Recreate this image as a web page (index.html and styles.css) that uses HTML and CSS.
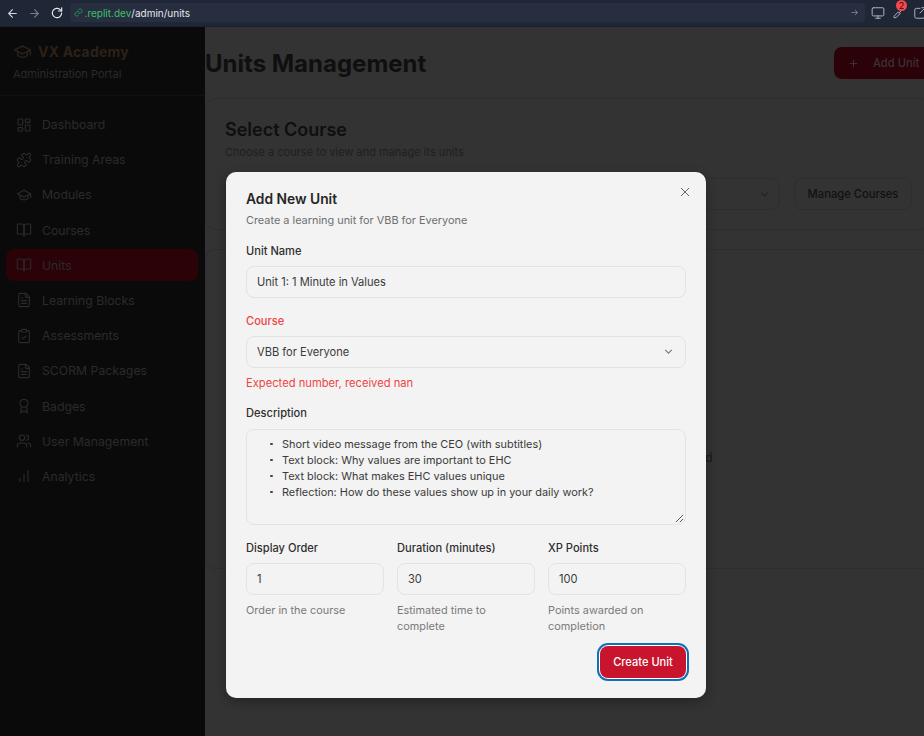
FILE: index.html
```html
<!DOCTYPE html>
<html lang="en">
<head>
<meta charset="utf-8">
<title>Units Management</title>
<link rel="stylesheet" href="styles.css">
</head>
<body>
<header class="browser">
  <svg class="b-icon back" viewBox="0 0 24 24"><path d="M19 12H5M12 5l-7 7 7 7"/></svg>
  <svg class="b-icon fwd" viewBox="0 0 24 24"><path d="M5 12h14M12 5l7 7-7 7"/></svg>
  <svg class="b-icon reload" viewBox="0 0 24 24"><path d="M20 12a8 8 0 1 1-2.600-5.900L20 8.500"/><path d="M20 3v5.500h-5.500"/></svg>
  <div class="url">
    <svg class="link" viewBox="0 0 24 24"><path d="M10 13a5 5 0 0 0 7.500.5l3-3a5 5 0 0 0-7-7l-1.700 1.700"/><path d="M14 11a5 5 0 0 0-7.500-.5l-3 3a5 5 0 0 0 7 7l1.700-1.700"/></svg>
    <span class="host">.replit.dev</span><span class="path">/admin/units</span>
    <svg class="go" viewBox="0 0 24 24"><path d="M4 12h16M13 5l7 7-7 7"/></svg>
  </div>
  <svg class="t-icon" viewBox="0 0 24 24"><rect x="2" y="3" width="20" height="14" rx="2"/><path d="M8 21h8M12 17v4"/></svg>
  <div class="ext">
    <svg class="t-icon" viewBox="0 0 24 24"><path d="M21 3l-9 9M4 17l7-7 3 3-7 7H4z"/></svg>
    <span class="badge">2</span>
  </div>
  <svg class="t-icon" viewBox="0 0 24 24"><path d="M12 4H6a3 3 0 0 0-3 3v11a3 3 0 0 0 3 3h11a3 3 0 0 0 3-3v-6M21 3l-9 9M15 3h6v6"/></svg>
</header>

<div class="app">
  <aside class="sidebar">
    <div class="brand">
      <div class="brand-row">
        <svg class="cap" viewBox="0 0 24 24"><path d="M22 10v6M2 10l10-5 10 5-10 5z"/><path d="M6 12v5c3 3 9 3 12 0v-5"/></svg>
        <span class="brand-name">VX Academy</span>
      </div>
      <div class="brand-sub">Administration Portal</div>
    </div>
    <nav class="nav">
      <a class="nav-item"><svg class="ico" viewBox="0 0 24 24"><rect x="3" y="3" width="7" height="9" rx="1"/><rect x="14" y="3" width="7" height="5" rx="1"/><rect x="14" y="12" width="7" height="9" rx="1"/><rect x="3" y="16" width="7" height="5" rx="1"/></svg>Dashboard</a>
      <a class="nav-item"><svg class="ico" viewBox="0 0 24 24"><path d="M19.439 7.85c-.049.322.059.648.289.878l1.568 1.568c.47.47.706 1.087.706 1.704s-.235 1.233-.706 1.704l-1.611 1.611a.98.98 0 0 1-.837.276c-.47-.07-.802-.48-.968-.925a2.501 2.501 0 1 0-3.214 3.214c.446.166.855.497.925.968a.979.979 0 0 1-.276.837l-1.61 1.61a2.404 2.404 0 0 1-1.705.707 2.402 2.402 0 0 1-1.704-.706l-1.568-1.568a1.026 1.026 0 0 0-.877-.29c-.493.074-.84.504-1.02.968a2.5 2.5 0 1 1-3.237-3.237c.464-.18.894-.527.967-1.02a1.026 1.026 0 0 0-.289-.877l-1.568-1.568A2.402 2.402 0 0 1 1.998 12c0-.617.236-1.234.706-1.704L4.23 8.77c.24-.24.581-.353.917-.303.515.077.877.528 1.073 1.01a2.5 2.5 0 1 0 3.259-3.259c-.482-.196-.933-.558-1.01-1.073-.05-.336.062-.676.303-.917l1.525-1.525A2.402 2.402 0 0 1 12 1.998c.617 0 1.234.236 1.704.706l1.568 1.568c.23.23.556.338.877.29.493-.074.84-.504 1.02-.968a2.5 2.5 0 1 1 3.237 3.237c-.464.18-.894.527-.967 1.02Z"/></svg>Training Areas</a>
      <a class="nav-item"><svg class="ico" viewBox="0 0 24 24"><path d="M22 10v6M2 10l10-5 10 5-10 5z"/><path d="M6 12v5c3 3 9 3 12 0v-5"/></svg>Modules</a>
      <a class="nav-item"><svg class="ico" viewBox="0 0 24 24"><path d="M2 3h6a4 4 0 0 1 4 4v14a3 3 0 0 0-3-3H2z"/><path d="M22 3h-6a4 4 0 0 0-4 4v14a3 3 0 0 1 3-3h7z"/></svg>Courses</a>
      <a class="nav-item active"><svg class="ico" viewBox="0 0 24 24"><path d="M2 3h6a4 4 0 0 1 4 4v14a3 3 0 0 0-3-3H2z"/><path d="M22 3h-6a4 4 0 0 0-4 4v14a3 3 0 0 1 3-3h7z"/></svg>Units</a>
      <a class="nav-item"><svg class="ico" viewBox="0 0 24 24"><path d="M15 2H6a2 2 0 0 0-2 2v16a2 2 0 0 0 2 2h12a2 2 0 0 0 2-2V7Z"/><path d="M14 2v4a2 2 0 0 0 2 2h4"/><path d="M10 9H8M16 13H8M16 17H8"/></svg>Learning Blocks</a>
      <a class="nav-item"><svg class="ico" viewBox="0 0 24 24"><rect x="8" y="2" width="8" height="4" rx="1"/><path d="M16 4h2a2 2 0 0 1 2 2v14a2 2 0 0 1-2 2H6a2 2 0 0 1-2-2V6a2 2 0 0 1 2-2h2"/><path d="m9 14 2 2 4-4"/></svg>Assessments</a>
      <a class="nav-item"><svg class="ico" viewBox="0 0 24 24"><path d="M15 2H6a2 2 0 0 0-2 2v16a2 2 0 0 0 2 2h12a2 2 0 0 0 2-2V7Z"/><path d="M14 2v4a2 2 0 0 0 2 2h4"/><path d="M10 9H8M16 13H8M16 17H8"/></svg>SCORM Packages</a>
      <a class="nav-item"><svg class="ico" viewBox="0 0 24 24"><circle cx="12" cy="8" r="6"/><path d="M15.477 12.89 17 22l-5-3-5 3 1.523-9.11"/></svg>Badges</a>
      <a class="nav-item"><svg class="ico" viewBox="0 0 24 24"><path d="M16 21v-2a4 4 0 0 0-4-4H6a4 4 0 0 0-4 4v2"/><circle cx="9" cy="7" r="4"/><path d="M22 21v-2a4 4 0 0 0-3-3.870M16 3.130a4 4 0 0 1 0 7.750"/></svg>User Management</a>
      <a class="nav-item"><svg class="ico" viewBox="0 0 24 24"><path d="M12 20V10M18 20V4M6 20v-4"/></svg>Analytics</a>
    </nav>
  </aside>

  <main class="main">
    <div class="page-head">
      <h1 class="page-title">Units Management</h1>
      <button class="add-btn"><svg class="plus" viewBox="0 0 24 24"><path d="M5 12h14M12 5v14"/></svg>Add Unit</button>
    </div>
    <section class="card">
      <h2 class="card-title">Select Course</h2>
      <p class="card-sub">Choose a course to view and manage its units</p>
      <div class="card-row">
        <div class="bg-select"><svg class="chev-dim" viewBox="0 0 24 24"><path d="m6 9 6 6 6-6"/></svg></div>
        <button class="manage">Manage Courses</button>
      </div>
    </section>
    <section class="card-empty"><span class="stray">No units found</span></section>
  </main>
</div>

<div class="dialog">
  <button class="close" aria-label="Close"><svg viewBox="0 0 24 24"><path d="M18 6 6 18M6 6l12 12"/></svg></button>
  <h2 class="d-title">Add New Unit</h2>
  <p class="d-desc">Create a learning unit for VBB for Everyone</p>

  <label class="lbl first">Unit Name</label>
  <div class="field">Unit 1: 1 Minute in Values</div>

  <label class="lbl err">Course</label>
  <div class="field select">VBB for Everyone<svg class="chev" viewBox="0 0 24 24"><path d="m6 9 6 6 6-6"/></svg></div>
  <p class="err-msg">Expected number, received nan</p>

  <label class="lbl desc">Description</label>
  <div class="field area">
    <ul class="bullets">
      <li>Short video message from the CEO (with subtitles)</li>
      <li>Text block: Why values are important to EHC</li>
      <li>Text block: What makes EHC values unique</li>
      <li>Reflection: How do these values show up in your daily work?</li>
    </ul>
    <svg class="grip" viewBox="0 0 10 10"><path d="M1 9l8-8M5.500 9L9 5.500"/></svg>
  </div>

  <div class="triple">
    <div>
      <label class="lbl tight">Display Order</label>
      <div class="field">1</div>
      <p class="hint">Order in the course</p>
    </div>
    <div>
      <label class="lbl tight">Duration (minutes)</label>
      <div class="field">30</div>
      <p class="hint">Estimated time to complete</p>
    </div>
    <div>
      <label class="lbl tight">XP Points</label>
      <div class="field">100</div>
      <p class="hint">Points awarded on completion</p>
    </div>
  </div>

  <div class="d-foot"><button class="create">Create Unit</button></div>
</div>
</body>
</html>
```
FILE: styles.css
```css
* { box-sizing: border-box; }
html, body { margin: 0; height: 100%; }
body {
  width: 924px; height: 736px; overflow: hidden; position: relative;
  font-family: Inter, "Liberation Sans", sans-serif;
  background: #333;
}
h1, h2, p { margin: 0; }
button { font-family: inherit; }

/* Browser chrome */
.browser {
  height: 27px; background: #1f2636; display: flex; align-items: center;
  padding-left: 6px; border-bottom: 1px solid #1a2030;
}
.b-icon { width: 13px; height: 13px; fill: none; stroke-width: 2; stroke-linecap: round; stroke-linejoin: round; flex: none; }
.back { stroke: #d5d8de; }
.fwd { stroke: #7b818d; margin-left: 9px; }
.reload { stroke: #e8eaee; margin-left: 9px; width: 14px; height: 14px; }
.url {
  width: 795px; height: 19px; margin-left: 5.500px; margin-top: -1px; flex: none;
  background: #272e40; border-radius: 4px; display: flex; align-items: center;
  padding: 0 6px 0 4px; font-size: 10px;
}
.link { width: 9px; height: 9px; fill: none; stroke: #1f9d55; stroke-width: 2.400; margin-right: 2px; }
.host { color: #3fc063; }
.path { color: #e6e8ec; }
.go { width: 9px; height: 9px; margin-left: auto; fill: none; stroke: #8a909c; stroke-width: 2; }
.t-icon { width: 14px; height: 14px; fill: none; stroke: #aeb3bd; stroke-width: 1.700; stroke-linecap: round; stroke-linejoin: round; flex: none; }
.url + .t-icon { margin-left: 6px; }
.ext { position: relative; display: flex; margin-left: 7px; flex: none; }
.ext + .t-icon { margin-left: 7px; }
.badge {
  position: absolute; left: 4.500px; top: -6px; width: 11px; height: 11px; border-radius: 50%;
  background: #f4494f; color: #40060a; font-size: 9px; line-height: 11px; text-align: center;
}

/* App */
.app { display: flex; height: 709px; }
.sidebar { width: 205px; flex: none; background: #0a0a0a; }
.brand { height: 69px; padding: 15px 13px 0; border-bottom: 1px solid #111; }
.brand-row { display: flex; align-items: center; gap: 6px; }
.cap { width: 19px; height: 19px; fill: none; stroke: #2c2118; stroke-width: 2; stroke-linecap: round; stroke-linejoin: round; }
.brand-name { color: #2c2118; font-size: 14px; font-weight: 700; letter-spacing: .2px; }
.brand-sub { color: #2a2a2a; font-size: 11px; margin-top: 6px; }
.nav { padding: 12.500px 7px 0 6px; display: flex; flex-direction: column; gap: 3.200px; }
.nav-item {
  height: 32px; display: flex; align-items: center; gap: 10px; padding-left: 10px;
  color: #2b2b2b; font-size: 12.250px; border-radius: 8px;
}
.active { background: #2a0207; }
.ico { width: 16px; height: 16px; fill: none; stroke: #2b2b2b; stroke-width: 1.700; stroke-linecap: round; stroke-linejoin: round; flex: none; }

.main { flex: 1; min-width: 0; overflow: hidden; }
.page-head { width: 729px; height: 71px; padding-top: 20px; display: flex; justify-content: space-between; }
.page-title { color: #0f0f0f; font-size: 24px; line-height: 32px; font-weight: 700; margin-top: 1px; }
.add-btn {
  width: 100px; height: 32px; background: #2a0207; border: 0; border-radius: 8px;
  color: #3d3138; font-size: 11.200px; font-weight: 500; display: flex; align-items: center; gap: 13px; padding: 0 0 0 13px;
}
.plus { width: 13px; height: 13px; fill: none; stroke: #3d3138; stroke-width: 1.800; }
.card {
  width: 727px; height: 132px; border: 1px solid #2e2e2e; border-radius: 10px;
  padding: 20px 19px 0;
}
.card-title { color: #0f0f0f; font-size: 18px; line-height: 22px; font-weight: 600; }
.card-sub { color: #1f1f1f; font-size: 11px; margin-top: 4px; }
.card-row { display: flex; justify-content: space-between; margin-top: 19px; gap: 14px; }
.bg-select { flex: 1; height: 32px; border: 1px solid #2e2e2e; border-radius: 8px; display: flex; justify-content: flex-end; align-items: center; padding-right: 8px; }
.chev-dim { width: 13px; height: 13px; fill: none; stroke: #222; stroke-width: 2; }
.manage { width: 118px; height: 32px; flex: none; background: none; border: 1px solid #2e2e2e; border-radius: 8px; color: #111; font-size: 11.200px; font-weight: 500; padding: 0; }
.card-empty {
  width: 727px; height: 320px; margin-top: 19px; border: 1px solid #2e2e2e; border-radius: 10px;
  display: flex; align-items: center; justify-content: center; padding-top: 96px;
  color: #1a1a1a; font-size: 12.500px;
}
.stray { margin-left: 202px; }

/* Dialog */
.dialog {
  position: absolute; left: 226px; top: 172px; width: 480px; height: 526px;
  background: #f3f3f3; border-radius: 10px; padding: 19px 20px 0;
  box-shadow: 0 4px 12px rgba(0,0,0,.3);
  color: #2a2a2a;
}
.close { position: absolute; right: 13px; top: 12px; width: 16px; height: 16px; padding: 0; background: none; border: 0; display: flex; }
.close svg { width: 16px; height: 16px; fill: none; stroke: #666; stroke-width: 1.500; }
.d-title { font-size: 13.800px; line-height: 16px; font-weight: 600; color: #262626; }
.d-desc { font-size: 10.900px; line-height: 14px; margin-top: 5.500px; color: #6f6f6f; }
.lbl { display: block; font-size: 11.100px; font-weight: 500; line-height: 14px; color: #2f2f2f; margin: 17px 0 8px; }
.lbl.first { margin-top: 17px; }
.lbl.err { color: #ef4444; margin-top: 16px; margin-bottom: 8px; }
.lbl.desc { margin-top: 16px; margin-bottom: 9px; }
.lbl.tight { margin: 0 0 8px; }
.field {
  height: 32px; border: 1px solid #e3e3e3; border-radius: 8px; padding: 0 10px;
  font-size: 11.100px; display: flex; align-items: center; color: #3a3a3a;
}
.select { justify-content: space-between; }
.chev { width: 13px; height: 13px; fill: none; stroke: #777; stroke-width: 2; }
.err-msg { font-size: 11.200px; line-height: 14px; margin-top: 8px; color: #ef4444; }
.area { height: 96px; display: block; position: relative; padding-top: 6px; }
.bullets { margin: 0; padding: 0 0 0 25px; font-size: 10.900px; line-height: 16px; list-style: none; }
.bullets li { position: relative; }
.bullets li::before { content: ""; position: absolute; left: -12px; top: 7px; width: 2.500px; height: 2.500px; background: #444; border-radius: 50%; }
.grip { position: absolute; right: 1px; bottom: 1px; width: 9px; height: 9px; fill: none; stroke: #444; stroke-width: 1; }
.triple { display: grid; grid-template-columns: repeat(3, 138px); gap: 13px; margin-top: 16px; }
.hint { font-size: 10.900px; line-height: 16px; margin-top: 7px; color: #7a7a7a; }
.d-foot { display: flex; justify-content: flex-end; margin-top: 12px; }
.create {
  width: 86px; height: 32px; background: #c8142c; color: #fff; border: 0; border-radius: 8px;
  font-size: 11.100px; font-weight: 500; padding: 0;
  box-shadow: 0 0 0 1px #fff, 0 0 0 3px #0f6fb8;
}
```
